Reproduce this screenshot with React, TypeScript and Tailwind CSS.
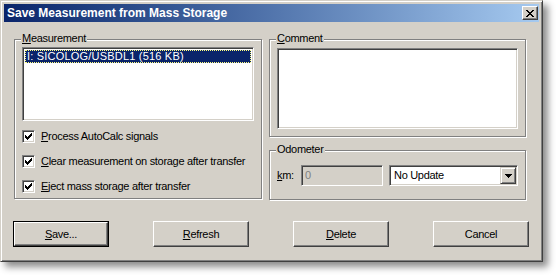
import * as React from "react";
import { FC, ReactNode } from "react";

const GroupBox: FC<{ label: ReactNode; className?: string; children?: ReactNode }> = ({
  label,
  className,
  children,
}) => (
  <div
    className={`relative border border-[#808080] shadow-[inset_1px_1px_0_#fff,1px_1px_0_#fff] ${className ?? ""}`}
  >
    <span className="absolute -top-[8px] left-[6px] bg-[#d4d0c8] px-[1px] leading-[13px] whitespace-nowrap">
      {label}
    </span>
    {children}
  </div>
);

const CheckRow: FC<{ children: ReactNode }> = ({ children }) => (
  <div className="flex items-center h-[13px]">
    <div className="w-[13px] h-[13px] bg-white border border-t-[#808080] border-l-[#808080] border-b-white border-r-white shadow-[inset_1px_1px_0_#404040,inset_-1px_-1px_0_#d4d0c8] flex items-center justify-center">
      <svg width="7" height="7" viewBox="0 0 7 7" shapeRendering="crispEdges">
        <path d="M0 2h1v3h-1zM1 3h1v3h-1zM2 4h1v3h-1zM3 3h1v3h-1zM4 2h1v3h-1zM5 1h1v3h-1zM6 0h1v3h-1z" fill="#000" />
      </svg>
    </div>
    <span className="ml-[6px] leading-[13px] whitespace-nowrap">{children}</span>
  </div>
);

const Button: FC<{ children: ReactNode; primary?: boolean }> = ({ children, primary }) =>
  primary ? (
    <div className="w-[96px] h-[26px] border border-black">
      <div className="w-full h-full border border-t-white border-l-white border-b-[#404040] border-r-[#404040] shadow-[inset_-1px_-1px_0_#808080] flex items-center justify-center">
        {children}
      </div>
    </div>
  ) : (
    <div className="w-[96px] h-[26px] border border-t-white border-l-white border-b-[#404040] border-r-[#404040] shadow-[inset_-1px_-1px_0_#808080] flex items-center justify-center">
      {children}
    </div>
  );

const App: FC = () => {
  return (
    <div className="w-[556px] h-[277px] bg-white font-['Liberation_Sans',Arial,sans-serif] text-[11px] tracking-[-0.3px] text-black">
      <div className="w-[543px] h-[262px] bg-[#d4d0c8] border border-t-[#d4d0c8] border-l-[#d4d0c8] border-b-[#404040] border-r-[#404040] shadow-[inset_1px_1px_0_#fff,inset_-1px_-1px_0_#808080,5px_5px_7px_rgba(0,0,0,0.45)] px-[3px] pt-[3px] flex flex-col">
        <div className="h-[18px] flex items-center bg-gradient-to-r from-[#0a246a] to-[#a6caf0] pl-[3px] pr-[1px]">
          <span className="text-white font-bold text-[12px] tracking-normal flex-1">
            Save Measurement from Mass Storage
          </span>
          <div className="w-[16px] h-[14px] bg-[#d4d0c8] border border-t-white border-l-white border-b-[#404040] border-r-[#404040] shadow-[inset_-1px_-1px_0_#808080] flex items-center justify-center">
            <svg width="8" height="7" viewBox="0 0 8 7" shapeRendering="crispEdges">
              <path d="M0 0h2v1h-2zM6 0h2v1h-2zM1 1h2v1h-2zM5 1h2v1h-2zM2 2h4v1h-4zM3 3h2v1h-2zM2 4h4v1h-4zM1 5h2v1h-2zM5 5h2v1h-2zM0 6h2v1h-2zM6 6h2v1h-2z" fill="#000" />
            </svg>
          </div>
        </div>

        <div className="flex mt-[17px] ml-[10px]">
          <GroupBox label={<><u>M</u>easurement</>} className="w-[248px] h-[160px] px-[7px] pt-[7px]">
            <div className="h-[74px] bg-white border border-t-[#808080] border-l-[#808080] border-b-white border-r-white shadow-[inset_1px_1px_0_#404040,inset_-1px_-1px_0_#d4d0c8] p-[2px]">
              <div className="h-[13px] bg-[#0a246a] text-white outline outline-1 outline-dotted outline-[#ffff80] -outline-offset-1 leading-[13px] pl-[2px] tracking-[0.2px] whitespace-nowrap">
                I: SICOLOG/USBDL1 (516 KB)
              </div>
            </div>
            <div className="flex flex-col gap-[12px] mt-[9px]">
              <CheckRow>
                <u>P</u>rocess AutoCalc signals
              </CheckRow>
              <CheckRow>
                <u>C</u>lear measurement on storage after transfer
              </CheckRow>
              <CheckRow>
                <u>E</u>ject mass storage after transfer
              </CheckRow>
            </div>
          </GroupBox>

          <div className="ml-[7px] flex flex-col">
            <GroupBox label={<><u>C</u>omment</>} className="w-[257px] h-[98px] px-[7px] pt-[8px]">
              <div className="h-[81px] bg-white border border-t-[#808080] border-l-[#808080] border-b-white border-r-white shadow-[inset_1px_1px_0_#404040,inset_-1px_-1px_0_#d4d0c8]" />
            </GroupBox>
            <GroupBox label="Odometer" className="w-[257px] h-[50px] mt-[13px] px-[7px] pt-[14px]">
              <div className="flex items-center">
                <span className="w-[24px]">
                  <u>k</u>m:
                </span>
                <div className="w-[82px] h-[21px] bg-[#d4d0c8] border border-t-[#808080] border-l-[#808080] border-b-white border-r-white shadow-[inset_1px_1px_0_#404040,inset_-1px_-1px_0_#d4d0c8] pl-[3px] flex items-center text-[#808080]">
                  0
                </div>
                <div className="ml-[6px] w-[129px] h-[21px] bg-white border border-t-[#808080] border-l-[#808080] border-b-white border-r-white shadow-[inset_1px_1px_0_#404040,inset_-1px_-1px_0_#d4d0c8] p-[1px] flex items-center">
                  <span className="flex-1 pl-[3px]">No Update</span>
                  <div className="w-[16px] h-full bg-[#d4d0c8] border border-t-[#d4d0c8] border-l-[#d4d0c8] border-b-[#404040] border-r-[#404040] shadow-[inset_1px_1px_0_#fff,inset_-1px_-1px_0_#808080] flex items-center justify-center">
                    <svg width="7" height="4" viewBox="0 0 7 4" shapeRendering="crispEdges">
                      <path d="M0 0h7v1h-7zM1 1h5v1h-5zM2 2h3v1h-3zM3 3h1v1h-1z" fill="#000" />
                    </svg>
                  </div>
                </div>
              </div>
            </GroupBox>
          </div>
        </div>

        <div className="flex gap-[44px] mt-[21px] ml-[9px]">
          <Button primary>
            <span>
              <u>S</u>ave...
            </span>
          </Button>
          <Button>
            <span>
              <u>R</u>efresh
            </span>
          </Button>
          <Button>
            <span>
              <u>D</u>elete
            </span>
          </Button>
          <Button>Cancel</Button>
        </div>
      </div>
    </div>
  );
};

export default App;
